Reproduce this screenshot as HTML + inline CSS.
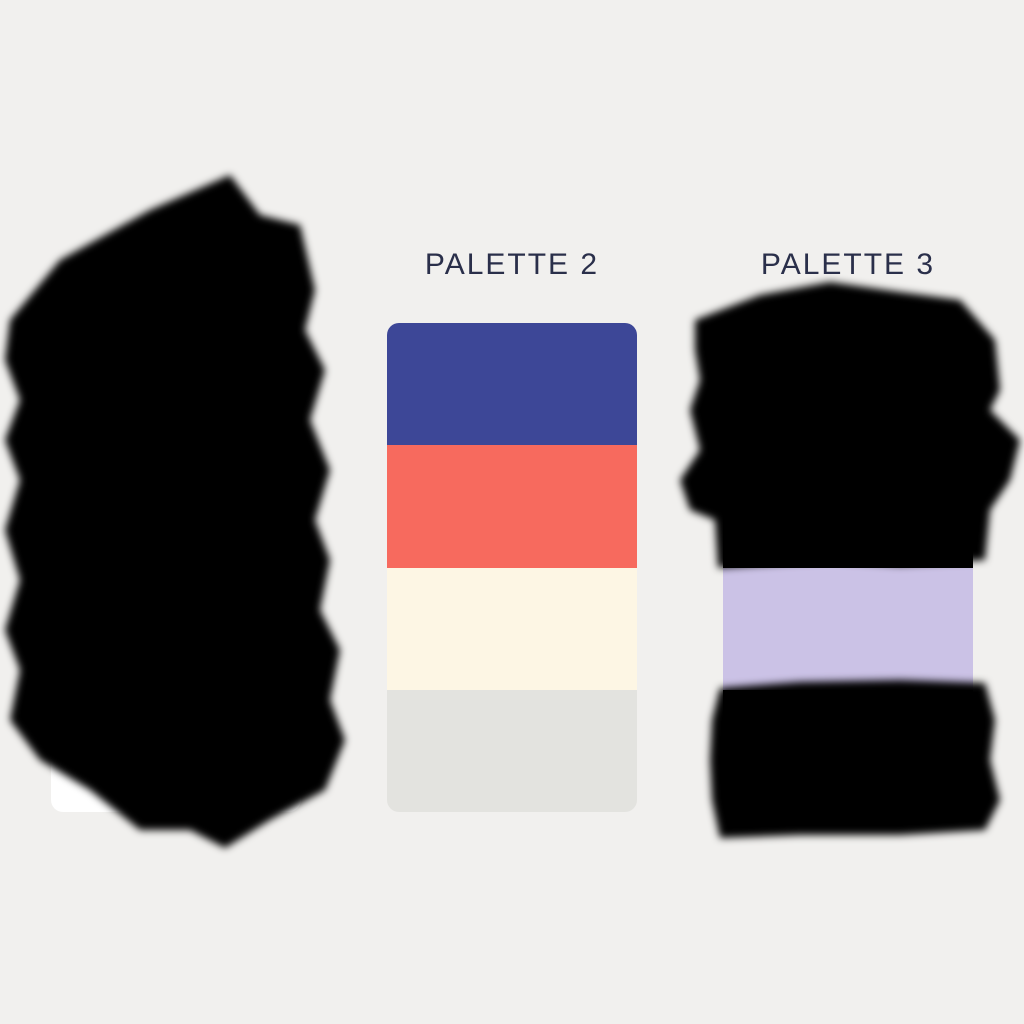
<!DOCTYPE html>
<html><head><meta charset="utf-8"><style>
html,body{margin:0;padding:0;width:1024px;height:1024px;background:#f1f0ee;overflow:hidden;position:relative;font-family:"Liberation Sans",sans-serif}
.t{position:absolute;top:248px;width:300px;text-align:center;font-size:30px;letter-spacing:2px;color:#2a2f4a;font-weight:500}
.card{position:absolute;top:323px;width:250px;height:489px;border-radius:12px;overflow:hidden}
.card div{height:122.25px}
</style></head><body>
<div class="t" style="left:23px">PALETTE 1</div>
<div class="t" style="left:362px">PALETTE 2</div>
<div class="t" style="left:698px">PALETTE 3</div>
<div class="card" style="left:51px;background:#fff"></div>
<div class="card" style="left:387px">
<div style="background:#3d4797"></div><div style="background:#f76a5e"></div><div style="background:#fdf6e4"></div><div style="background:#e3e3df"></div></div>
<div class="card" style="left:723px">
<div style="background:#000"></div><div style="background:#000"></div><div style="background:#cbc2e6"></div><div style="background:#000"></div></div>
<svg width="1024" height="1024" style="position:absolute;left:0;top:0">
<defs><filter id="b"><feGaussianBlur stdDeviation="4"/></filter></defs>
<g filter="url(#b)" fill="#000">
<path d="M10,320 L60,260 L150,210 L230,175 L260,215 L300,225 L315,290 L305,330 L325,370 L310,420 L330,470 L315,520 L330,560 L320,610 L340,650 L330,700 L345,740 L325,790 L270,820 L225,848 L190,830 L140,830 L90,790 L40,760 L10,720 L20,670 L5,630 L20,580 L5,530 L20,480 L5,440 L20,400 L5,360 Z"/>
<path d="M695,320 L760,295 L830,282 L900,292 L960,300 L995,340 L1000,390 L990,410 L1020,440 L1010,480 L990,510 L985,560 L900,565 L830,560 L718,568 L715,520 L690,510 L680,480 L700,450 L690,410 L700,380 L695,350 Z"/>
<path d="M720,688 L800,682 L900,680 L985,683 L995,720 L990,760 L1000,800 L985,830 L900,835 L800,835 L720,838 L712,800 L710,760 L712,720 Z"/>
</g></svg>
</body></html>
